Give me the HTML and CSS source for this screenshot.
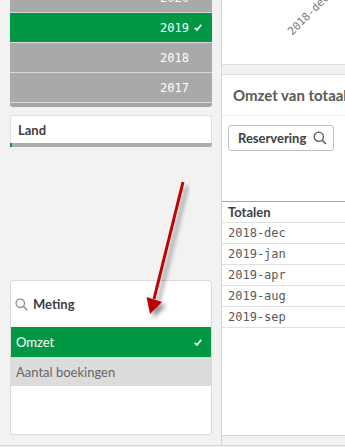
FILE: index.html
```html
<!DOCTYPE html>
<html>
<head>
    <meta charset="UTF-8">
    <title>Omzet dashboard</title>
    <link rel="stylesheet" href="styles.css">
</head>
<body>
    <div class="sheet">
        <div class="left">
            <div class="yearlist">
                <div class="yr">2020<span class="tick"></span></div>
                <div class="yr sel">2019<span class="tick"><svg width="8" height="7" viewBox="0 0 8 7"><path d="M0.8 3.8 L3 6 L7.2 0.8" fill="none" stroke="#fff" stroke-width="1.8"/></svg></span></div>
                <div class="yr">2018<span class="tick"></span></div>
                <div class="yr">2017<span class="tick"></span></div>
                <div class="yr-foot"></div>
            </div>

            <div class="filter">
                <div class="filter-title">Land</div>
                <div class="filter-bar"><span></span></div>
            </div>

            <div class="listbox">
                <div class="lb-head">
                    <svg width="13" height="13" viewBox="0 0 13 13"><circle cx="5.3" cy="5.3" r="4.2" fill="none" stroke="#8c8c8c" stroke-width="1.3"/><path d="M8.4 8.4 L12.2 12.2" stroke="#8c8c8c" stroke-width="1.5"/></svg>
                    <span>Meting</span>
                </div>
                <div class="lb-item sel">Omzet<svg width="8" height="7" viewBox="0 0 8 7"><path d="M0.8 3.8 L3 6 L7.2 0.8" fill="none" stroke="#fff" stroke-width="1.8"/></svg></div>
                <div class="lb-item alt">Aantal boekingen</div>
            </div>
        </div>

        <div class="right">
            <div class="card chart">
                <span class="axis-label">2018-dec</span>
            </div>
            <div class="card tablecard">
                <div class="card-title">Omzet van totaal</div>
                <div class="toolbar">
                    <div class="dim-btn">Reservering
                        <svg width="14" height="14" viewBox="0 0 14 14"><circle cx="5.8" cy="5.8" r="4.6" fill="none" stroke="#595959" stroke-width="1.3"/><path d="M9.2 9.2 L13 13" stroke="#595959" stroke-width="1.5"/></svg>
                    </div>
                </div>
                <table class="totals">
                    <thead><tr><th>Totalen</th></tr></thead>
                    <tbody>
                        <tr><td>2018-dec</td></tr>
                        <tr><td>2019-jan</td></tr>
                        <tr><td>2019-apr</td></tr>
                        <tr><td>2019-aug</td></tr>
                        <tr><td>2019-sep</td></tr>
                    </tbody>
                </table>
            </div>
        </div>

        <!-- rode pijl over de pagina -->
        <svg class="arrow" width="60" height="150" viewBox="130 170 60 150">
            <defs>
                <filter id="shadow" x="-50%" y="-20%" width="200%" height="140%">
                    <feDropShadow dx="4" dy="4" stdDeviation="2" flood-color="#000" flood-opacity="0.4"/>
                </filter>
            </defs>
            <g filter="url(#shadow)">
                <path d="M183 182 L154 299" stroke="#c00000" stroke-width="3"/>
                <path d="M146.5 297 L162 302 L150 314 Z" fill="#c00000"/>
            </g>
        </svg>
    </div>
</body>
</html>
```

FILE: styles.css
```css
body {
    margin: 0;
    background: #f2f2f2;
    font-family: Lato, "Liberation Sans", sans-serif;
    color: #595959;
}

.sheet {
    position: relative;
    display: flex;
    height: 445px;
    border-bottom: 1px solid #d4d4d4;
    overflow: hidden;
}

.left {
    width: 202px;
    margin-left: 10px;
    display: flex;
    flex-direction: column;
}

.yearlist {
    margin-top: -17px;
}

.yr {
    height: 29px;
    border-bottom: 1px solid #d8d8d8;
    background: #a9a9a9;
    color: #fff;
    font-family: "DejaVu Sans Mono", monospace;
    font-size: 12px;
    display: flex;
    align-items: center;
    justify-content: flex-end;
    padding-right: 10px;
}

.yr.sel {
    background: #009845;
}

.tick {
    width: 8px;
    margin-left: 5px;
    display: flex;
}

.yr-foot {
    height: 4px;
    background: #a3a3a3;
    border-radius: 0 0 3px 3px;
}

.filter {
    margin-top: 8px;
}

.filter-title {
    height: 27px;
    background: #fff;
    border: 1px solid #dedede;
    border-bottom: 0;
    border-radius: 3px 3px 0 0;
    padding-left: 7px;
    display: flex;
    align-items: center;
    font-weight: bold;
    font-size: 13px;
    color: #404040;
}

.filter-bar {
    height: 4px;
    background: #acacac;
    border-radius: 0 0 2px 2px;
}

.filter-bar span {
    display: block;
    width: 2px;
    height: 4px;
    background: #009845;
}

.listbox {
    margin-top: auto;
    margin-bottom: 10px;
    height: 153px;
    background: #fff;
    border: 1px solid #d9d9d9;
    border-radius: 3px;
}

.lb-head {
    height: 46px;
    display: flex;
    align-items: center;
    padding-left: 4px;
    gap: 5px;
    font-weight: bold;
    font-size: 13px;
    color: #404040;
}

.lb-item {
    height: 30px;
    padding: 0 9px 0 5px;
    display: flex;
    align-items: center;
    justify-content: space-between;
    font-size: 13px;
}

.lb-item.sel {
    background: #009845;
    color: #fff;
}

.lb-item.alt {
    height: 29px;
    background: #dcdcdc;
    color: #666;
}

.right {
    margin-left: 9px;
    flex: 1;
    border-left: 1px solid #d4d4d4;
    display: flex;
    flex-direction: column;
    min-width: 0;
}

.card {
    background: #fff;
    width: 300px;
}

.chart {
    height: 64px;
    border-bottom: 1px solid #dddddd;
    margin-bottom: 9px;
    position: relative;
}

.axis-label {
    position: absolute;
    left: 60px;
    top: 8px;
    font-family: "DejaVu Sans Mono", monospace;
    font-size: 11px;
    color: #777;
    transform: rotate(-45deg);
}

.tablecard {
    height: 360px;
    border-top: 1px solid #dddddd;
    border-bottom: 1px solid #d4d4d4;
}

.card-title {
    height: 40px;
    border-bottom: 1px solid #eeeeee;
    padding-left: 11px;
    display: flex;
    align-items: center;
    font-weight: bold;
    font-size: 15px;
    color: #595959;
}

.toolbar {
    padding: 9px 0 0 6px;
    height: 76px;
}

.dim-btn {
    border: 1px solid #bfbfbf;
    border-radius: 3px;
    display: flex;
    align-items: center;
    justify-content: space-between;
    padding: 0 6px 0 9px;
    box-sizing: border-box;
    width: 106px;
    height: 26px;
    font-weight: bold;
    font-size: 13px;
    color: #404040;
}

.totals {
    width: 100%;
    border-collapse: collapse;
}

.totals th {
    text-align: left;
    height: 20px;
    padding: 0 0 0 6px;
    border-top: 1px solid #a6a6a6;
    border-bottom: 1px solid #e0e0e0;
    font-size: 13px;
    color: #404040;
}

.totals td {
    height: 20px;
    padding: 0 0 0 6px;
    border-bottom: 1px solid #e0e0e0;
    font-family: "DejaVu Sans Mono", monospace;
    font-size: 12px;
    color: #595959;
}

.arrow {
    position: absolute;
    left: 130px;
    top: 170px;
}
```
